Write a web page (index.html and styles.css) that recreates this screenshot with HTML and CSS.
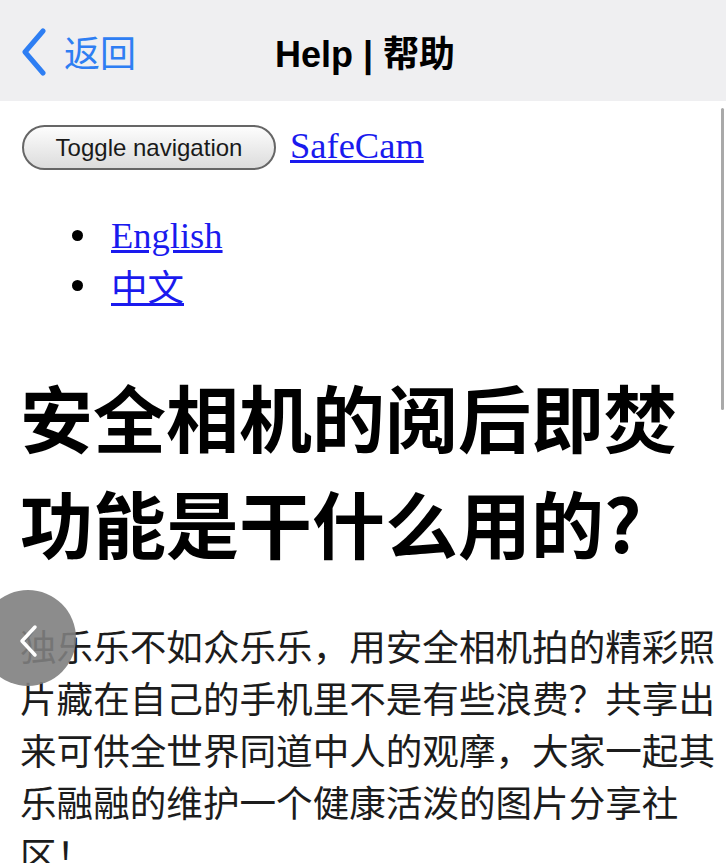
FILE: index.html
```html
<!DOCTYPE html>
<html lang="zh-CN">
<head>
    <meta charset="UTF-8">
    <meta name="viewport" content="width=device-width, initial-scale=1.0">
    <title>Help | 帮助</title>
    <link rel="stylesheet" href="styles.css">
</head>
<body>

    <header class="topbar">
        <a class="back" href="#">
            <svg class="back-icon" width="28" height="48" viewBox="0 0 28 48">
                <polyline points="23,3 5,24 23,45" fill="none" stroke="currentColor" stroke-width="5" stroke-linecap="round" stroke-linejoin="round"/>
            </svg>
            <span>返回</span>
        </a>
        <h1 class="topbar-title">Help | 帮助</h1>
        <span></span>
    </header>

    <main class="page">
        <div class="navbar">
            <button class="toggle">Toggle navigation</button>
            <a class="brand" href="#">SafeCam</a>
        </div>

        <ul class="langs">
            <li><a href="#">English</a></li>
            <li><a href="#">中文</a></li>
        </ul>

        <h2 class="question">安全相机的阅后即焚功能是干什么用的?</h2>

        <p class="answer">独乐乐不如众乐乐，用安全相机拍的精彩照片藏在自己的手机里不是有些浪费？共享出来可供全世界同道中人的观摩，大家一起其乐融融的维护一个健康活泼的图片分享社区！</p>
    </main>

    <!-- floating swipe-back handle and scroll indicator -->
    <div class="swipe-back">
        <svg width="22" height="34" viewBox="0 0 22 34">
            <polyline points="17,3 4,17 17,31" fill="none" stroke="#fff" stroke-width="3.5" stroke-linecap="round" stroke-linejoin="round"/>
        </svg>
    </div>
    <div class="scroll-thumb"></div>

</body>
</html>
```

FILE: styles.css
```css
* {
    margin: 0;
    padding: 0;
    box-sizing: border-box;
}
body {
    background: #fff;
    color: #000;
    font-family: "Liberation Serif", "Noto Sans CJK SC", serif;
    position: relative;
    overflow: hidden;
    height: 863px;
}
.topbar {
    height: 101px;
    background: #efeff1;
    display: grid;
    grid-template-columns: 1fr auto 1fr;
    align-items: center;
    padding: 0 20px;
}
.back {
    display: flex;
    align-items: center;
    gap: 16px;
    color: #2e7ef3;
    text-decoration: none;
    font-family: "Noto Sans CJK SC", sans-serif;
    font-size: 36px;
}
.back-icon {
    margin-top: 2px;
}
.topbar-title {
    font-family: "Liberation Sans", "Noto Sans CJK SC", sans-serif;
    font-size: 36px;
    font-weight: bold;
    margin-left: 4px;
}
.page {
    padding: 24px 8px 0 22px;
}
.navbar {
    display: flex;
    align-items: center;
    gap: 14px;
}
.toggle {
    height: 45px;
    width: 254px;
    padding: 0 28px;
    border: 2px solid #666;
    border-radius: 23px;
    background: linear-gradient(#fdfdfd, #dcdcdc);
    font-family: "Liberation Sans", sans-serif;
    font-size: 24px;
    color: #1a1a1a;
}
.brand {
    font-size: 36.5px;
    color: #1a1aee;
    margin-top: -4px;
}
.langs {
    list-style: none;
    padding-left: 50px;
    margin-top: 40px;
}
.langs li {
    display: flex;
    align-items: center;
    height: 50px;
    font-size: 36.5px;
}
.langs li::before {
    content: "";
    width: 11px;
    height: 11px;
    border-radius: 50%;
    background: #000;
    margin-right: 28px;
}
.langs a {
    color: #1a1aee;
}
.question {
    margin-top: 52px;
    margin-left: -2px;
    font-family: "Noto Sans CJK SC", sans-serif;
    font-size: 73px;
    font-weight: bold;
    line-height: 106px;
    color: #000;
}
.answer {
    margin-top: 46px;
    margin-left: -2px;
    font-family: "Noto Sans CJK SC", sans-serif;
    font-size: 36.6px;
    line-height: 52px;
    color: #1c1c1c;
}
.swipe-back {
    position: absolute;
    left: -20px;
    top: 590px;
    width: 96px;
    height: 96px;
    border-radius: 50%;
    background: rgba(128, 128, 128, 0.9);
    display: flex;
    align-items: center;
    justify-content: center;
    padding-left: 2px;
    padding-top: 6px;
}
.scroll-thumb {
    position: absolute;
    right: 2px;
    top: 108px;
    width: 3px;
    height: 302px;
    border-radius: 2px;
    background: #a9a9a9;
}
```
